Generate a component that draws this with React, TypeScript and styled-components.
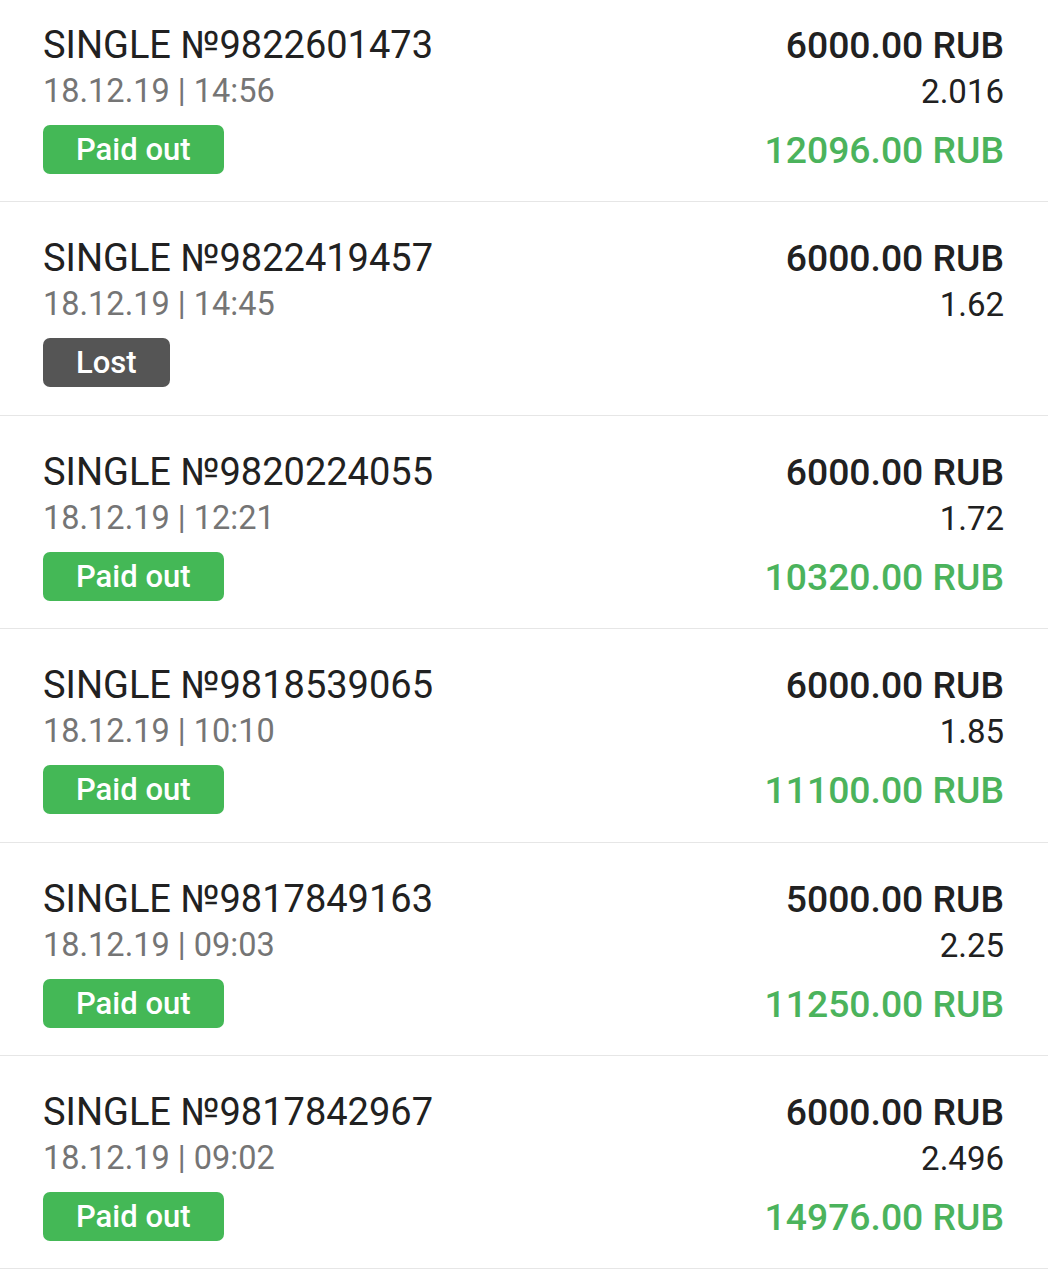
import styled, { createGlobalStyle } from "styled-components";

const GlobalStyle = createGlobalStyle`
  html, body {
    margin: 0;
    padding: 0;
    background: #ffffff;
    overflow: hidden;
  }
  body {
    font-family: Roboto, "Noto Sans", "Liberation Sans", sans-serif;
  }
`;

const BetList = styled.div`
  margin-top: -11px;
  background: #ffffff;
`;

const BetRow = styled.div`
  display: grid;
  grid-template-columns: 1fr auto;
  padding: 33px 44px 27.4px 43px;
  border-bottom: 1px solid #e6e6e6;
`;

const LeftCol = styled.div`
  display: flex;
  flex-direction: column;
  align-items: flex-start;
`;

const RightCol = styled.div`
  display: flex;
  flex-direction: column;
  align-items: flex-end;
`;

const Title = styled.div`
  font-size: 38px;
  line-height: 46px;
  color: #212121;
  white-space: nowrap;
`;

const DateLine = styled.div`
  font-size: 32.5px;
  line-height: 47px;
  color: #757575;
  white-space: nowrap;
`;

const Badge = styled.div<{ $status: "won" | "lost" }>`
  margin-top: 10px;
  height: 49px;
  padding: 0 33px;
  border-radius: 7px;
  display: flex;
  align-items: center;
  font-size: 31px;
  font-weight: 500;
  color: #ffffff;
  background: ${(p) => (p.$status === "won" ? "#44b856" : "#555555")};
`;

const Stake = styled.div`
  font-size: 37.3px;
  line-height: 46px;
  font-weight: 500;
  color: #212121;
  white-space: nowrap;
`;

const Odds = styled.div`
  font-size: 33px;
  line-height: 47px;
  color: #212121;
`;

const Payout = styled.div`
  margin-top: 12px;
  font-size: 37.3px;
  line-height: 46px;
  font-weight: 500;
  color: #4bb35c;
  white-space: nowrap;
`;

type Bet = {
  id: string;
  date: string;
  stake: string;
  odds: string;
  payout?: string;
};

const bets: Bet[] = [
  { id: "9822601473", date: "18.12.19 | 14:56", stake: "6000.00", odds: "2.016", payout: "12096.00" },
  { id: "9822419457", date: "18.12.19 | 14:45", stake: "6000.00", odds: "1.62" },
  { id: "9820224055", date: "18.12.19 | 12:21", stake: "6000.00", odds: "1.72", payout: "10320.00" },
  { id: "9818539065", date: "18.12.19 | 10:10", stake: "6000.00", odds: "1.85", payout: "11100.00" },
  { id: "9817849163", date: "18.12.19 | 09:03", stake: "5000.00", odds: "2.25", payout: "11250.00" },
  { id: "9817842967", date: "18.12.19 | 09:02", stake: "6000.00", odds: "2.496", payout: "14976.00" },
];

export default function App() {
  return (
    <>
      <GlobalStyle />
      <BetList>
        {bets.map((bet) => (
          <BetRow key={bet.id}>
            <LeftCol>
              <Title>SINGLE №{bet.id}</Title>
              <DateLine>{bet.date}</DateLine>
              {bet.payout ? (
                <Badge $status="won">Paid out</Badge>
              ) : (
                <Badge $status="lost">Lost</Badge>
              )}
            </LeftCol>
            <RightCol>
              <Stake>{bet.stake} RUB</Stake>
              <Odds>{bet.odds}</Odds>
              {bet.payout && <Payout>{bet.payout} RUB</Payout>}
            </RightCol>
          </BetRow>
        ))}
      </BetList>
    </>
  );
}
